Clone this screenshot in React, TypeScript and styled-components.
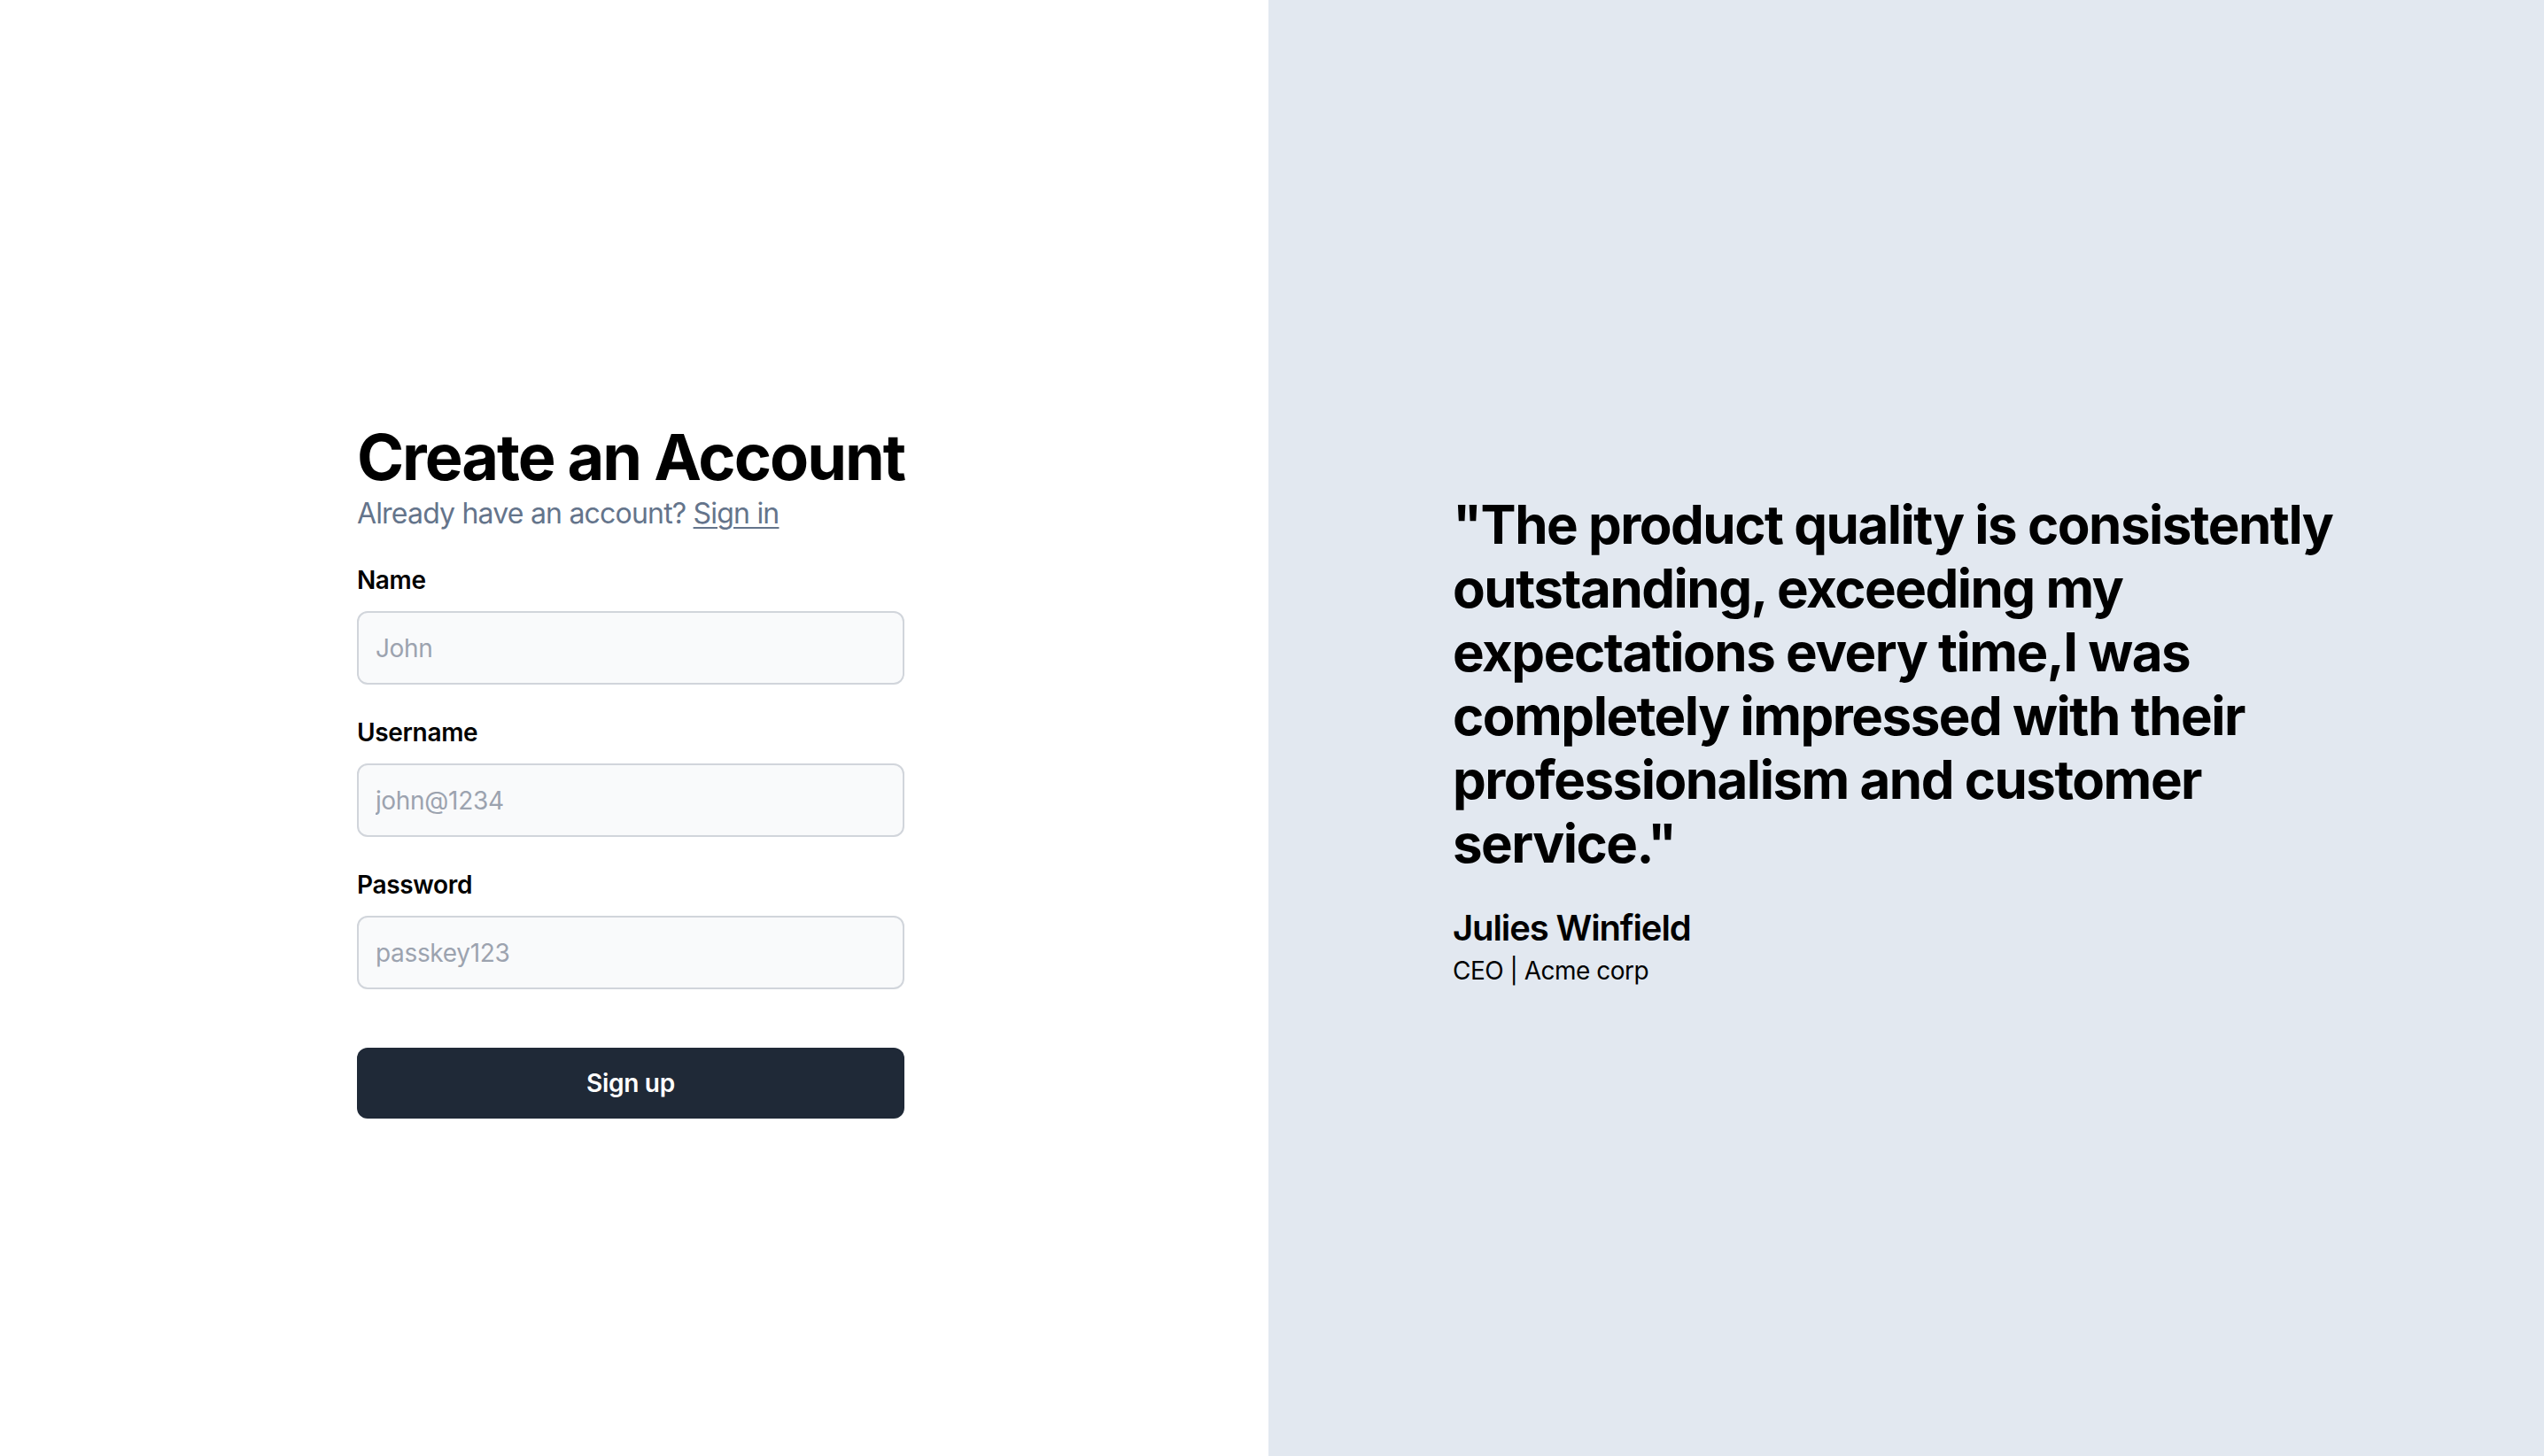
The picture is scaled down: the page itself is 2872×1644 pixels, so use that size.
import React from "react";
import styled, { createGlobalStyle } from "styled-components";

const GlobalStyle = createGlobalStyle`
  * { box-sizing: border-box; }
  html, body { margin: 0; padding: 0; }
  body {
    font-family: Inter, "Noto Sans", "Liberation Sans", sans-serif;
    color: #000;
    background: #fff;
  }
`;

const Page = styled.div`
  display: grid;
  grid-template-columns: 1432px 1fr;
  min-height: 100vh;
`;

const FormPanel = styled.section`
  background: #ffffff;
  display: flex;
  flex-direction: column;
  align-items: center;
  justify-content: flex-start;
  padding: 476px 8px 0 0;
`;

const FormCard = styled.form`
  width: fit-content;
  display: flex;
  flex-direction: column;
`;

const Heading = styled.h1`
  margin: 0;
  font-size: 72px;
  line-height: 80px;
  font-weight: 700;
  letter-spacing: -0.028em;
  color: #000;
`;

const Subtitle = styled.p`
  margin: 0;
  font-size: 32px;
  line-height: 48px;
  letter-spacing: -0.8px;
  color: #64748b;
`;

const SignInLink = styled.a`
  color: #64748b;
  text-decoration: underline;
  text-underline-offset: 4px;
  text-decoration-thickness: 2px;
`;

const Fields = styled.div`
  margin-top: 31px;
  display: flex;
  flex-direction: column;
  gap: 34px;
`;

const Field = styled.div`
  display: flex;
  flex-direction: column;
  gap: 15px;
`;

const Label = styled.label`
  font-size: 28px;
  line-height: 40px;
  font-weight: 600;
  letter-spacing: -0.3px;
  color: #000;
`;

const Input = styled.input`
  width: 100%;
  height: 83px;
  padding: 0 19px;
  border: 2px solid #d1d5db;
  border-radius: 12px;
  background: #f9fafb;
  font-family: inherit;
  font-size: 28px;
  letter-spacing: -0.3px;
  color: #111827;
  outline: none;
  &::placeholder {
    color: #9ca3af;
  }
`;

const SubmitButton = styled.button`
  margin-top: 66px;
  width: 100%;
  height: 80px;
  border: none;
  border-radius: 12px;
  background: #1f2937;
  color: #ffffff;
  font-family: inherit;
  font-size: 28px;
  font-weight: 600;
  letter-spacing: -0.3px;
  cursor: pointer;
`;

const QuotePanel = styled.section`
  background: #e2e8f0;
  display: flex;
  align-items: center;
  justify-content: center;
  padding-top: 28px;
`;

const QuoteBlock = styled.figure`
  margin: 0;
  width: 1024px;
  display: flex;
  flex-direction: column;
`;

const QuoteText = styled.blockquote`
  margin: 0;
  font-size: 60px;
  line-height: 72px;
  font-weight: 700;
  letter-spacing: -0.025em;
  color: #000;
`;

const AuthorName = styled.figcaption`
  margin-top: 32px;
  font-size: 40px;
  line-height: 56px;
  font-weight: 600;
  letter-spacing: -0.028em;
  color: #000;
`;

const AuthorRole = styled.div`
  font-size: 28px;
  line-height: 40px;
  letter-spacing: -0.5px;
  color: #000;
`;

const fields = [
  { id: "name", label: "Name", placeholder: "John" },
  { id: "username", label: "Username", placeholder: "john@1234" },
  { id: "password", label: "Password", placeholder: "passkey123" },
];

export default function App() {
  return (
    <>
      <GlobalStyle />
      <Page>
        <FormPanel>
          <FormCard onSubmit={(e) => e.preventDefault()}>
            <Heading>Create an Account</Heading>
            <Subtitle>
              Already have an account? <SignInLink href="#">Sign in</SignInLink>
            </Subtitle>
            <Fields>
              {fields.map((f) => (
                <Field key={f.id}>
                  <Label htmlFor={f.id}>{f.label}</Label>
                  <Input id={f.id} type="text" placeholder={f.placeholder} />
                </Field>
              ))}
            </Fields>
            <SubmitButton type="submit">Sign up</SubmitButton>
          </FormCard>
        </FormPanel>
        <QuotePanel>
          <QuoteBlock>
            <QuoteText>
              "The product quality is consistently outstanding, exceeding my expectations every
              time,I was completely impressed with their professionalism and customer service."
            </QuoteText>
            <AuthorName>Julies Winfield</AuthorName>
            <AuthorRole>CEO | Acme corp</AuthorRole>
          </QuoteBlock>
        </QuotePanel>
      </Page>
    </>
  );
}
